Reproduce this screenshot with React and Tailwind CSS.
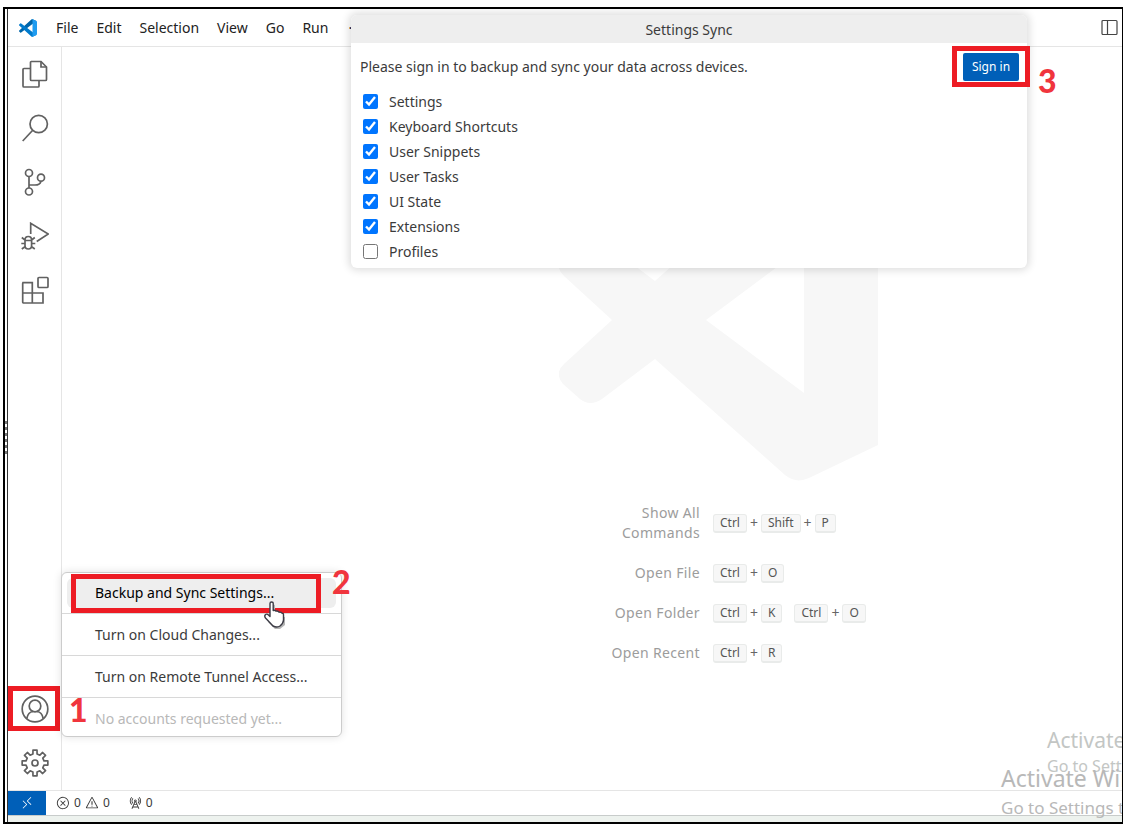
import React from "react";
import { VscRemote, VscError, VscWarning, VscRadioTower } from "react-icons/vsc";

const menus = ["File", "Edit", "Selection", "View", "Go", "Run"];

// Outline of an eight-toothed cog centred on (14, 14).
const cogPoints = Array.from({ length: 8 }, (_, i) =>
  [[-13, 9.2], [-9, 13], [9, 13], [13, 9.2]].map(([offset, radius]) => {
    const angle = ((i * 45 + offset) * Math.PI) / 180;
    return `${(14 + radius * Math.sin(angle)).toFixed(2)},${(14 - radius * Math.cos(angle)).toFixed(2)}`;
  })
).flat().join(" ");

const glyphs = {
  files: (
    <>
      <path d="M9 8.500H3Q2 8.500 2 9.500V26Q2 27 3 27H17Q18 27 18 26V21" />
      <path d="M10 1.500H20L25.500 7V19.500Q25.500 20.500 24.500 20.500H10.500Q9.500 20.500 9.500 19.500V2.500Q9.500 1.500 10.500 1.500Z" />
      <path d="M20 1.500V7H25.500" />
    </>
  ),
  search: (
    <>
      <circle cx="17.700" cy="10" r="8.700" />
      <path d="M11.500 16.500 1.700 27" />
    </>
  ),
  source: (
    <>
      <circle cx="8" cy="5" r="3.500" />
      <circle cx="8" cy="23.500" r="3.500" />
      <circle cx="20" cy="9.700" r="3.500" />
      <path d="M8 8.500V20M8.500 17H14Q19 17 20 13.200" />
    </>
  ),
  debug: (
    <>
      <path d="M9.700 12V1.300L27.300 12 15.700 19.500" />
      <path d="M4 18Q4 14.500 7.300 14.500T10.600 18V23.500Q10.600 27 7.300 27T4 23.500ZM4 18.500H10.600M.8 15.500 4 18M13.800 15.500 10.600 18M.3 21.500H4M10.600 21.500H14.300M.8 27 4.300 24.500M13.800 27 10.300 24.500" />
    </>
  ),
  extensions: (
    <>
      <path d="M2 6.700H11.300V17H22V27H2.700Q1.700 27 1.700 26V7.700ZM1.700 17H11.300V27" />
      <rect x="17" y="1.500" width="10" height="10" rx="1" />
    </>
  ),
  account: (
    <>
      <circle cx="14" cy="14" r="12.800" />
      <circle cx="14" cy="11" r="5.800" />
      <path d="M5.800 23.500Q7 17 12 16.500M22.200 23.500Q21 17 16 16.500" />
    </>
  ),
  manage: (
    <>
      <polygon points={cogPoints} strokeLinejoin="round" />
      <circle cx="14" cy="14" r="3" />
    </>
  ),
};

const topViews = [
  ["Explorer", "files"],
  ["Search", "search"],
  ["Source Control", "source"],
  ["Run and Debug", "debug"],
  ["Extensions", "extensions"],
];

const syncOptions = [
  ["Settings", true],
  ["Keyboard Shortcuts", true],
  ["User Snippets", true],
  ["User Tasks", true],
  ["UI State", true],
  ["Extensions", true],
  ["Profiles", false],
];

const shortcuts = [
  ["Show All Commands", [["Ctrl", "Shift", "P"]]],
  ["Open File", [["Ctrl", "O"]]],
  ["Open Folder", [["Ctrl", "K"], ["Ctrl", "O"]]],
  ["Open Recent", [["Ctrl", "R"]]],
];

function CodeLogo() {
  return (
    <svg viewBox="0 0 100 100" className="size-[18px]" aria-hidden="true">
      <path fill="#0065a9" d="M96.5 10.8 75.9.9a6.2 6.2 0 0 0-7.1 1.2L1.3 63.6a4.2 4.2 0 0 0 0 6.2l5.5 5a4.2 4.2 0 0 0 5.3.2L93.4 13.4c2.7-2.1 6.6-.1 6.6 3.3v-.3c0-2.4-1.4-4.5-3.5-5.6Z" />
      <path fill="#007acc" d="m96.5 89.2-20.6 9.9a6.2 6.2 0 0 1-7.1-1.2L1.3 36.4a4.2 4.2 0 0 1 0-6.2l5.5-5a4.2 4.2 0 0 1 5.3-.2l81.3 61.6c2.7 2.1 6.6.1 6.6-3.3v.3c0 2.4-1.4 4.5-3.5 5.6Z" />
      <path fill="#1f9cf0" d="M75.9 99.1a6.2 6.2 0 0 1-7.1-1.2c2.3 2.3 6.2.7 6.2-2.6V4.7c0-3.3-3.9-4.9-6.2-2.6A6.2 6.2 0 0 1 75.9.9l20.6 9.9a6.2 6.2 0 0 1 3.5 5.6v67.2c0 2.4-1.4 4.6-3.5 5.6Z" />
    </svg>
  );
}

function Letterpress() {
  return (
    <svg viewBox="0 0 319 322" className="h-[322px] w-[319px] shrink-0" aria-hidden="true">
      <path
        fill="#f7f7f7"
        fillRule="evenodd"
        d="M53 161 5 205Q-5 214 4 225L21 240Q31 248 43 240L96 200 226 316Q237 325 250 319L319 286V36L250 3Q237-3 226 6L96 122 43 82Q31 74 21 82L4 97Q-5 108 5 117ZM147 161 245 88V234Z"
      />
    </svg>
  );
}

function HandCursor() {
  return (
    <svg viewBox="0 0 24 30" className="absolute left-[201px] top-[22px] h-[30px] w-6" aria-hidden="true">
      <path fill="#b5b5b5" d="M9 4 12 5V14L22 17V25L17 29H12L5 22Z" />
      <path
        fill="#fff"
        stroke="#3c3c46"
        strokeWidth="1.4"
        strokeLinejoin="round"
        d="M7 3.5Q7 2 8.600 2T10.200 3.500V10.500Q12 9.800 13 11.200 15 10.600 16 12.200 18 11.800 19 13.200 20.500 13 20.500 15V20Q20.500 23 17 26 14 28 10 26L2.500 18Q1 16 2.500 14.500 4 13.500 5.500 15L7 16.500Z"
      />
    </svg>
  );
}

function IconButton({ label, glyph }) {
  return (
    <button aria-label={label} className="flex size-[54px] items-center justify-center text-[#616161]">
      <svg viewBox="0 0 28 28" className="size-7" fill="none" stroke="currentColor" strokeWidth="1.7" aria-hidden="true">
        {glyphs[glyph]}
      </svg>
    </button>
  );
}

function Separator() {
  return <div className="mt-[5px] mb-[6px] h-px bg-[#d8d8d8]" />;
}

function MenuItem({ children, className = "" }) {
  return (
    <button className={"mx-[5px] flex h-[30px] items-center rounded-md pl-7 text-left " + className}>
      {children}
    </button>
  );
}

function Key({ children }) {
  return (
    <kbd className="flex h-[19px] items-center rounded-[3px] border border-b-2 border-[#e9ebea] bg-[#f7f7f7] px-[6px] font-[inherit] text-xs text-[#555]">
      {children}
    </kbd>
  );
}

export default function App() {
  return (
    <div className="flex min-h-screen bg-white pt-[7px] pr-[2px] pb-[6px] pl-[3px] font-['Noto_Sans','Open_Sans',sans-serif] text-sm text-[#3b3b3b]">
      <div className="flex flex-1 border-2 border-r border-black">
        <div className="flex w-[2px] flex-col items-center justify-center gap-[3px] pt-11">
          {[0, 1, 2, 3, 4, 5].map((n) => (
            <span key={n} className="h-[3px] w-[2px] bg-[#777]" />
          ))}
        </div>

        <div className="relative flex min-w-0 flex-1 flex-col overflow-hidden border-l border-[#333]">
          <header className="flex h-[38px] items-center border-b border-[#e5e5e5] pr-1 pl-[11px]">
            <CodeLogo />
            <nav className="ml-[10px] flex text-[#222]">
              {menus.map((m) => (
                <button key={m} className="px-[9px]">{m}</button>
              ))}
              <button aria-label="More" className="px-[11px]">···</button>
            </nav>
            <button aria-label="Toggle Primary Side Bar" className="ml-auto text-[#444]">
              <svg viewBox="0 0 17 17" className="size-[17px]" fill="none" stroke="currentColor" strokeWidth="1.2" aria-hidden="true">
                <rect x="1" y="1.500" width="15" height="14" rx="1" />
                <path d="M6.500 1.500V15.500" />
              </svg>
            </button>
          </header>

          <div className="flex flex-1">
            <aside className="flex w-[54px] flex-col justify-between border-r border-[#e5e5e5]">
              <div>
                {topViews.map(([label, glyph]) => (
                  <IconButton key={label} label={label} glyph={glyph} />
                ))}
              </div>
              <div>
                <div className="relative">
                  <IconButton label="Accounts" glyph="account" />
                  <span className="pointer-events-none absolute top-1 left-0 h-[45px] w-[52px] border-[5px] border-[#ed1c24]" />
                </div>
                <IconButton label="Manage" glyph="manage" />
              </div>
            </aside>

            <main className="flex flex-1 flex-col items-start pt-[112px] pl-[497px]">
              <Letterpress />
              <dl className="mt-[22px] ml-[26px] grid grid-cols-[115px_auto] items-center gap-x-[13px] gap-y-5">
                {shortcuts.map(([label, chords]) => (
                  <React.Fragment key={label}>
                    <dt className="ml-auto w-min min-w-[96px] text-right leading-5 tracking-wide text-[#9c9c9c]">{label}</dt>
                    <dd className="flex gap-3">
                      {chords.map((keys, i) => (
                        <span key={i} className="flex items-center gap-[3px]">
                          {keys.map((k, j) => (
                            <React.Fragment key={k}>
                              {j > 0 && <span className="text-[#666]">+</span>}
                              <Key>{k}</Key>
                            </React.Fragment>
                          ))}
                        </span>
                      ))}
                    </dd>
                  </React.Fragment>
                ))}
              </dl>
            </main>
          </div>

          <footer className="flex h-[25px] items-center border-t border-[#e5e5e5] text-xs">
            <button aria-label="Open a Remote Window" className="flex h-full w-[38px] items-center justify-center bg-[#005fb8] text-white">
              <VscRemote className="size-[14px]" />
            </button>
            <button className="ml-[10px] flex items-center gap-1">
              <VscError className="size-[14px]" />0<VscWarning className="size-[14px]" />0
            </button>
            <button className="ml-[18px] flex items-center gap-1">
              <VscRadioTower className="size-[14px]" />0
            </button>
          </footer>
          <div className="h-[7px] border-t border-[#c8cccb] bg-[#edf2ee]" />

          <section className="absolute top-[6px] right-[95px] left-[343px] rounded-md bg-white pb-1 shadow-[0_0_8px_2px_rgba(0,0,0,0.14)]">
            <h1 className="flex h-[28px] items-center justify-center rounded-t-md bg-[#eee] pt-[2px]">Settings Sync</h1>
            <div className="flex items-center justify-between pt-[10px] pr-2 pl-[9px]">
              <p>Please sign in to backup and sync your data across devices.</p>
              <div className="relative">
                <button className="h-7 w-14 rounded-[2px] bg-[#005fb8] text-xs text-white">Sign in</button>
                <span className="pointer-events-none absolute -inset-x-[11px] -top-[7px] -bottom-[6px] border-[5px] border-[#ed1c24]" />
                <span className="absolute top-2 left-[75px] font-['Lato',sans-serif] text-[32px] leading-10 font-black text-[#f0353d]">3</span>
              </div>
            </div>
            <div className="mt-2 pl-3">
              {syncOptions.map(([label, on]) => (
                <label key={label} className="flex h-[25px] w-fit items-center gap-[11px]">
                  <input type="checkbox" defaultChecked={on} className="size-[15px]" />
                  {label}
                </label>
              ))}
            </div>
          </section>

          <div className="absolute bottom-[85px] left-[53px] flex w-[281px] flex-col rounded-md border border-[#ccc] bg-white pt-[5px] pb-[2px] shadow-[0_0_8px_rgba(0,0,0,0.12)]">
            <div className="relative flex flex-col">
              <MenuItem className="bg-[#eee] text-black">Backup and Sync Settings...</MenuItem>
              <span className="pointer-events-none absolute -top-1 left-[9px] h-[39px] w-[250px] border-[5px] border-[#ed1c24]" />
              <span className="absolute -top-4 left-[270px] font-['Lato',sans-serif] text-[32px] leading-10 font-black text-[#f0353d]">2</span>
              <HandCursor />
            </div>
            <Separator />
            <MenuItem>Turn on Cloud Changes...</MenuItem>
            <Separator />
            <MenuItem>Turn on Remote Tunnel Access...</MenuItem>
            <Separator />
            <div className="relative flex flex-col">
              <MenuItem className="text-[#b8b8b8]">No accounts requested yet...</MenuItem>
              <span className="absolute -top-[14px] left-[7px] font-['Lato',sans-serif] text-[32px] leading-10 font-black text-[#f0353d]">1</span>
            </div>
          </div>

          <div className="pointer-events-none absolute bottom-[44px] left-[1039px] whitespace-nowrap text-[#c3c6c4]">
            <p className="text-[21px] leading-7">Activate Windows</p>
            <p className="text-base leading-6">Go to Settings to activate Windows.</p>
          </div>
          <div className="pointer-events-none absolute bottom-0 left-[993px] whitespace-nowrap text-[#b8b8b8]">
            <p className="text-[23px] leading-8">Activate Windows</p>
            <p className="text-[17px] leading-7">Go to Settings to activate Windows.</p>
          </div>
        </div>
      </div>
    </div>
  );
}
